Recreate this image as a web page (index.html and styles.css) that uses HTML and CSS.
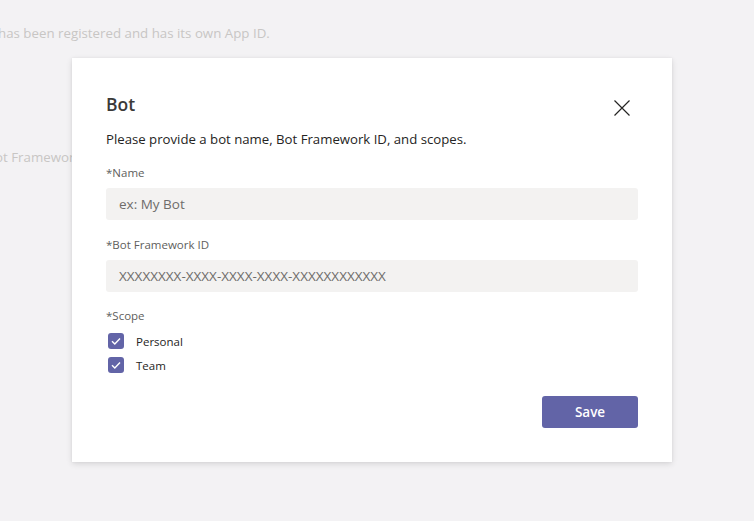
FILE: index.html
```html
<!DOCTYPE html>
<html lang="en">
<head>
<meta charset="utf-8">
<title>Bot</title>
<link rel="stylesheet" href="styles.css">
</head>
<body>
<div class="page">
  <p class="bg-text bg-text-1">has been registered and has its own App ID.</p>
  <p class="bg-text bg-text-2">ot Framework</p>
</div>
<div class="overlay">
  <div class="dialog">
    <div class="dialog-header">
      <h1 class="dialog-title">Bot</h1>
      <button class="close" aria-label="Close">
        <svg width="16" height="16" viewBox="0 0 16 16"><path d="M0.5 0.5 L15.5 15.5 M15.5 0.5 L0.5 15.5" stroke="#252423" stroke-width="1.2" fill="none"/></svg>
      </button>
    </div>
    <p class="dialog-desc">Please provide a bot name, Bot Framework ID, and scopes.</p>
    <div class="field">
      <label class="field-label">*Name</label>
      <div class="input">ex: My Bot</div>
    </div>
    <div class="field field-id">
      <label class="field-label">*Bot Framework ID</label>
      <div class="input">XXXXXXXX-XXXX-XXXX-XXXX-XXXXXXXXXXXX</div>
    </div>
    <div class="field scope">
      <label class="field-label">*Scope</label>
      <div class="check-row">
        <span class="checkbox"><svg width="16" height="16" viewBox="0 0 16 16"><path d="M4 8.2 L6.8 11 L12 5.4" stroke="#fff" stroke-width="1.4" fill="none"/></svg></span>
        <span class="check-label">Personal</span>
      </div>
      <div class="check-row">
        <span class="checkbox"><svg width="16" height="16" viewBox="0 0 16 16"><path d="M4 8.2 L6.8 11 L12 5.4" stroke="#fff" stroke-width="1.4" fill="none"/></svg></span>
        <span class="check-label">Team</span>
      </div>
    </div>
    <div class="actions">
      <button class="save">Save</button>
    </div>
  </div>
</div>
</body>
</html>
```
FILE: styles.css
```css
html, body {
  margin: 0;
  padding: 0;
}
body {
  background: #f3f2f4;
  font-family: "Open Sans", "Noto Sans", sans-serif;
  width: 754px;
  height: 521px;
  overflow: hidden;
  position: relative;
}
.bg-text {
  margin: 0;
  color: #c8c6c4;
  font-size: 13.3px;
  line-height: 18px;
  white-space: nowrap;
}
.bg-text-1 {
  padding-top: 24px;
  margin-left: -2px;
}
.bg-text-2 {
  padding-top: 106px;
  margin-left: -5px;
}
.overlay {
  position: absolute;
  inset: 0;
  display: flex;
  justify-content: center;
  align-items: flex-start;
  padding-top: 58px;
  padding-right: 10px;
}
.dialog {
  width: 600px;
  height: 404px;
  box-sizing: border-box;
  background: #fff;
  box-shadow: 0 2px 6px rgba(0,0,0,0.12), 0 0 2px rgba(0,0,0,0.06);
  padding: 34px 34px 0 34px;
}
.dialog-header {
  display: flex;
  justify-content: space-between;
  align-items: center;
}
.dialog-title {
  margin: 0;
  font-size: 17.5px;
  font-weight: 600;
  color: #3b3a39;
  line-height: 24px;
}
.close {
  border: 0;
  background: none;
  padding: 0;
  margin-right: 8px;
  margin-top: 8px;
  width: 16px;
  height: 16px;
  display: flex;
}
.dialog-desc {
  margin: 13px 0 0 0;
  font-size: 13.2px;
  line-height: 20px;
  color: #252423;
}
.field {
  margin-top: 16px;
}
.field-id {
  margin-top: 17px;
}
.field-label {
  display: block;
  font-size: 11.5px;
  line-height: 16px;
  color: #605e5c;
  margin-bottom: 7px;
}
.input {
  height: 32px;
  background: #f3f2f1;
  border-radius: 3px;
  padding-left: 13px;
  font-size: 13.5px;
  line-height: 32px;
  color: #6e6c6a;
}
.scope .field-label {
  margin-bottom: 5px;
}
.check-row {
  display: flex;
  align-items: center;
  height: 24px;
  padding-left: 2px;
}
.checkbox {
  width: 16px;
  height: 16px;
  border-radius: 3px;
  background: #6264a7;
  display: flex;
}
.check-label {
  margin-left: 12px;
  font-size: 11.5px;
  color: #252423;
}
.actions {
  display: flex;
  justify-content: flex-end;
  margin-top: 19px;
}
.save {
  width: 96px;
  height: 32px;
  border: 0;
  border-radius: 3px;
  background: #6264a7;
  color: #fff;
  font-family: inherit;
  font-size: 13.5px;
  font-weight: 600;
}
```
